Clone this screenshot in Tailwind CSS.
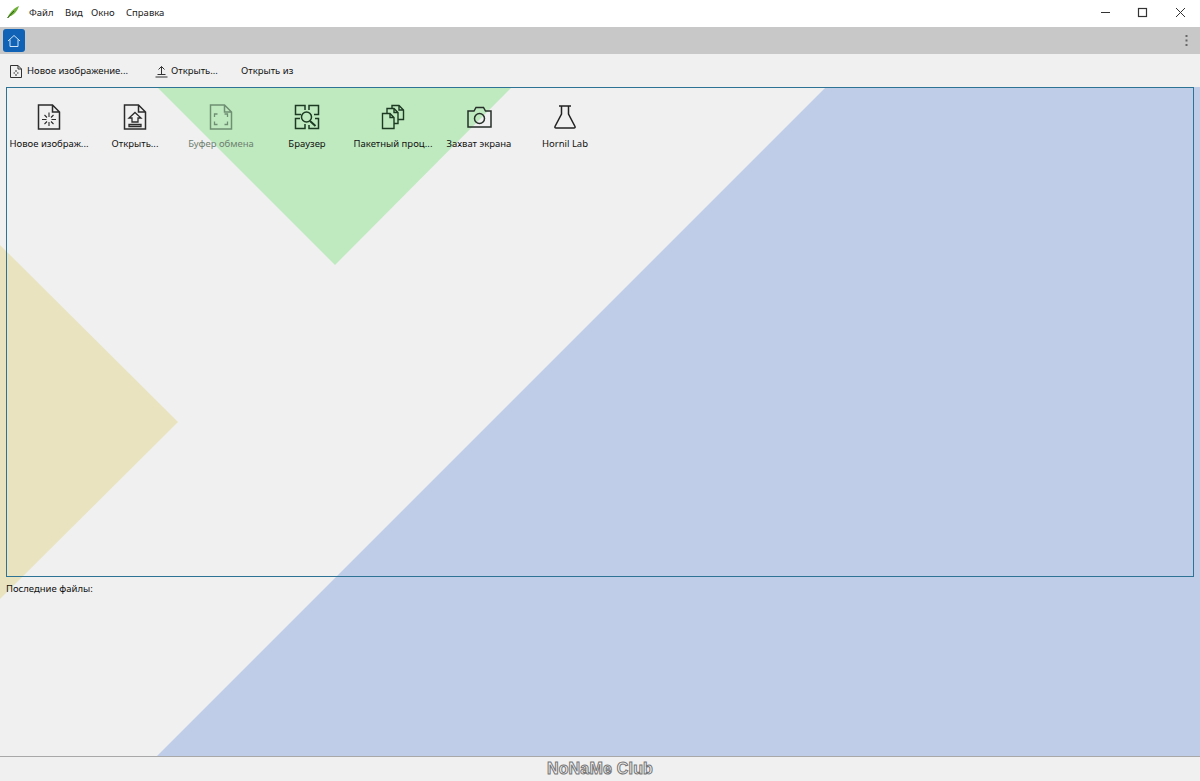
<!DOCTYPE html>
<html lang="ru">

<head>
  <meta charset="UTF-8" />
  <meta name="viewport" content="width=device-width, initial-scale=1.0" />
  <title>Главное окно</title>
  <script src="https://cdn.jsdelivr.net/npm/@tailwindcss/browser@4"></script>
</head>

<body class="w-[1200px] h-[781px] overflow-hidden bg-[#f0f0f0] text-[9.5px] leading-none text-[#111] font-['Noto_Sans','Open_Sans',sans-serif]">
  <div class="flex flex-col h-full">

    <!-- title bar -->
    <header class="h-[27px] shrink-0 bg-white flex items-center text-[#222]">
      <svg class="ml-[6px] mr-[9px] mb-[3px] w-[14px] h-[14px]" viewBox="0 0 14 14">
        <path d="M1.500 13 C3 8.500 7 3.500 13 1 C11.500 6 8 10 4 11.300 L2.300 13 Z" fill="#6fb03a" />
        <path d="M1.500 13 L8 6" stroke="#2f5f17" stroke-width="1" fill="none" />
      </svg>
      <nav class="flex mb-[1px]">
        <span class="w-[36px]">Файл</span>
        <span class="w-[26px]">Вид</span>
        <span class="w-[35px]">Окно</span>
        <span>Справка</span>
      </nav>
      <div class="ml-auto mr-[1px] flex items-center text-[#333] mb-[3px]">
        <svg class="w-[38px] h-[24px]" viewBox="0 0 38 24"><path d="M16 12.500H25" stroke="currentColor" fill="none" /></svg>
        <svg class="w-[38px] h-[24px]" viewBox="0 0 38 24"><rect x="15.500" y="8.500" width="8" height="8" stroke="currentColor" stroke-width="1.200" fill="none" /></svg>
        <svg class="w-[38px] h-[24px]" viewBox="0 0 38 24"><path d="M15 8l9 9M24 8l-9 9" stroke="currentColor" fill="none" /></svg>
      </div>
    </header>

    <!-- tab strip -->
    <div class="h-[27px] shrink-0 bg-[#c8c8c8] flex items-center justify-between pl-[3px] pr-[12px]">
      <button class="w-[22px] h-[23px] rounded-[3px] bg-[#0f62b5] flex items-center justify-center">
        <svg class="w-[14px] h-[14px]" viewBox="0 0 14 14">
          <path d="M1 7 L7 1.500 L13 7 M3 5.500 V12.500 H11 V5.500" stroke="#cfe4f7" stroke-width="1" fill="none" />
        </svg>
      </button>
      <svg class="w-[3px] h-[11px]" viewBox="0 0 3 11">
        <rect x="0.500" width="2" height="2" fill="#666" />
        <rect x="0.500" y="4.500" width="2" height="2" fill="#666" />
        <rect x="0.500" y="9" width="2" height="2" fill="#666" />
      </svg>
    </div>

    <!-- toolbar -->
    <div class="h-[33px] shrink-0 flex items-center bg-[#f0f0f0] relative z-10 pt-[1px]">
      <span class="ml-[9px] flex items-center w-[146px]">
        <svg class="w-[14px] h-[15px] mr-[4px]" viewBox="0 0 14 15" fill="none" stroke="#333">
          <path d="M1.500 1.500H9L12.500 5V13.500H1.500Z M9 1.500V5H12.500" />
          <path d="M7 6V8M7 10V12M4.500 9H6M8 9H9.500" />
        </svg>
        Новое изображение...
      </span>
      <span class="flex items-center w-[86px]">
        <svg class="w-[13px] h-[13px] mr-[3px]" viewBox="0 0 13 13" fill="none" stroke="#333">
          <path d="M6.500 9V1.500M3.500 4.500L6.500 1.500L9.500 4.500M2.500 9.500H10.500M0.500 12H12.500" />
        </svg>
        Открыть...
      </span>
      <span>Открыть из</span>
    </div>

    <!-- content with the colored background shapes -->
    <main class="flex-1 relative bg-[#f0f0f0]">
      <svg class="absolute inset-0 w-full h-full" viewBox="0 0 1200 669">
        <polygon points="826,0 1200,0 1200,669 157,669" fill="#bfcde9" />
        <polygon points="157,0 512,0 335,178" fill="#bfeac0" />
        <polygon points="0,158 178,335 0,512" fill="#e9e4bf" />
      </svg>

      <div class="relative h-full flex flex-col">
        <section class="mx-[6px] h-[490px] border border-[#2c7396] flex items-start">
          <!-- new image -->
          <div class="w-[86px] -ml-px flex flex-col items-center pt-[16px]">
            <svg class="w-[24px] h-[26px]" viewBox="0 0 24 26" fill="none" stroke="#2b2b2b" stroke-width="1.500">
              <path d="M1.500 1H15.500L22.500 8V25H1.500Z M15.500 1V8H22.500" />
              <path d="M12 8.500V13M12 18V22M5 15.500H9.500M14.500 15.500H19M7.500 11L10 13.500M14 17.500L16.500 20M7.500 20L10 17.500M14 13.500L16.500 11" stroke-width="1.100" />
            </svg>
            <span class="mt-[9px] whitespace-nowrap">Новое изображ...</span>
          </div>
          <!-- open -->
          <div class="w-[86px] flex flex-col items-center pt-[16px]">
            <svg class="w-[24px] h-[26px]" viewBox="0 0 24 26" fill="none" stroke="#2b2b2b" stroke-width="1.500">
              <path d="M1.500 1H15.500L22.500 8V25H1.500Z M15.500 1V8H22.500" />
              <path d="M12 8.500L18 14H15V18H9V14H6Z M6 20.500H18V22.500H6Z" stroke-width="1.300" />
            </svg>
            <span class="mt-[9px] whitespace-nowrap">Открыть...</span>
          </div>
          <!-- clipboard, disabled -->
          <div class="w-[86px] flex flex-col items-center pt-[16px] text-[#6f7f70]">
            <svg class="w-[24px] h-[26px]" viewBox="0 0 24 26" fill="none" stroke="#6f8f72" stroke-width="1.500">
              <path d="M1.500 1H15.500L22.500 8V25H1.500Z M15.500 1V8H22.500" />
              <path d="M5.500 13V10H8.500M15.500 10H18.500V13M5.500 17.500V20.500H8.500M15.500 20.500H18.500V17.500" stroke-width="1.300" />
            </svg>
            <span class="mt-[9px] whitespace-nowrap">Буфер обмена</span>
          </div>
          <!-- browser -->
          <div class="w-[86px] flex flex-col items-center pt-[16px]">
            <svg class="w-[26px] h-[26px]" viewBox="0 0 26 26" fill="none" stroke="#1d3a22" stroke-width="1.500">
              <path d="M7 10.500H1.500V1.500H11V6M15 6V1.500H24.500V10.500H20M6 14.500H1.500V24.500H11V20M15 21V24.500H24.500V14.500H21" />
              <circle cx="12.500" cy="13" r="5" />
              <path d="M16 17L21.500 22" stroke-width="2" />
            </svg>
            <span class="mt-[9px] whitespace-nowrap">Браузер</span>
          </div>
          <!-- batch -->
          <div class="w-[86px] flex flex-col items-center pt-[16px]">
            <svg class="w-[26px] h-[26px]" viewBox="-1 0 26 26" fill="none" stroke="#1d3a22" stroke-width="1.400">
              <path d="M1.500 9.500H9L13 13.500V24.500H1.500Z M9 9.500V13.500H13" />
              <path d="M6 9.500V4.500H13L17 8.500V19.500H13 M13 4.500V8.500H17" />
              <path d="M11 4.500V1.500H18L22.500 6V15.500H17 M18 1.500V6H22.500" />
            </svg>
            <span class="mt-[9px] whitespace-nowrap">Пакетный проц...</span>
          </div>
          <!-- screenshot -->
          <div class="w-[86px] flex flex-col items-center pt-[16px]">
            <svg class="w-[25px] h-[26px]" viewBox="0 0 25 26" fill="none" stroke="#262f28" stroke-width="1.500">
              <path d="M1 7H7L9 3.500H16.500L18.500 7H24V23H1Z" />
              <circle cx="12.500" cy="14.500" r="5" />
            </svg>
            <span class="mt-[9px] whitespace-nowrap">Захват экрана</span>
          </div>
          <!-- lab -->
          <div class="w-[86px] flex flex-col items-center pt-[16px]">
            <svg class="w-[24px] h-[26px]" viewBox="0 0 24 26" fill="none" stroke="#222" stroke-width="1.500">
              <path d="M6 2H18M8.500 2V10L2 22.500Q1.500 24 3 24H21Q22.500 24 22 22.500L15.500 10V2" />
            </svg>
            <span class="mt-[9px] whitespace-nowrap">Hornil Lab</span>
          </div>
        </section>
        <p class="ml-[6px] mt-[7px]">Последние файлы:</p>
      </div>
    </main>

    <!-- status bar -->
    <footer class="h-[25px] shrink-0 relative z-10 bg-[#f0f0f0] border-t border-[#a8a8a8] flex items-center justify-center">
      <span class="text-[16px] font-bold tracking-[0.2px] text-[#f4f4f4] [-webkit-text-stroke:1px_#777] font-['Liberation_Sans',sans-serif]">NoNaMe Club</span>
    </footer>
  </div>
</body>

</html>
